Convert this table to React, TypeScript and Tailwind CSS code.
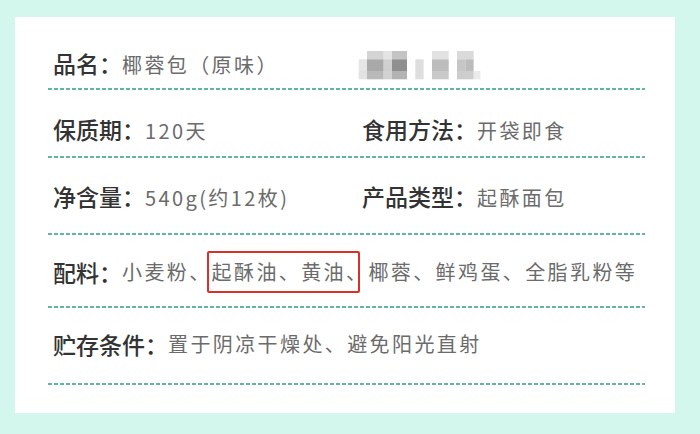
import React from "react";

const cjk = { fontFamily: '"Noto Sans CJK SC", "Noto Sans", sans-serif' };

function Mosaic() {
  const cells: [number, number, number, number, string][] = [
    [10, 0, 16.7, 8.3, "#d4d4d4"],
    [26.7, 0, 8.3, 8.3, "#e4e4e4"],
    [35, 0, 15, 8.3, "#c4c4c4"],
    [75, 0, 16.7, 8.3, "#e2e2e2"],
    [100, 0, 16.7, 8.3, "#dadada"],
    [1.7, 8.3, 8.3, 11.7, "#e6e6e6"],
    [10, 8.3, 16.7, 11.7, "#a9a9a9"],
    [26.7, 8.3, 8.3, 11.7, "#cfcfcf"],
    [35, 8.3, 15, 11.7, "#8f8f8f"],
    [58.3, 8.3, 8.3, 11.7, "#dedede"],
    [75, 8.3, 16.7, 11.7, "#bdbdbd"],
    [100, 8.3, 8.3, 11.7, "#c6c6c6"],
    [108.3, 8.3, 8.3, 11.7, "#bcbcbc"],
    [1.7, 20, 8.3, 8.3, "#e2e2e2"],
    [10, 20, 16.7, 8.3, "#b9b9b9"],
    [26.7, 20, 8.3, 8.3, "#d2d2d2"],
    [35, 20, 15, 8.3, "#b3b3b3"],
    [58.3, 20, 8.3, 8.3, "#dedede"],
    [75, 20, 16.7, 8.3, "#c9c9c9"],
    [100, 20, 16.7, 8.3, "#cdcdcd"],
    [116.7, 20, 6.7, 8.3, "#ebebeb"],
  ];
  return (
    <svg width="125" height="29" viewBox="0 0 125 29" className="block blur-[0.6px]">
      {cells.map(([x, y, w, h, c], i) => (
        <rect key={i} x={x} y={y} width={w} height={h} fill={c} />
      ))}
    </svg>
  );
}

function Dash() {
  return (
    <div className="h-[2px] w-full bg-[repeating-linear-gradient(90deg,#4fae98_0px,#4fae98_4px,transparent_4px,transparent_6px)] opacity-90" />
  );
}

function Label({ children }: { children: React.ReactNode }) {
  return <span className="text-[23px] font-medium text-[#333333]">{children}</span>;
}

function Value({ children }: { children: React.ReactNode }) {
  return <span className="text-[20px] tracking-[2.4px] text-[#6b6b6b]">{children}</span>;
}

export default function App() {
  return (
    <div className="w-[700px] h-[434px] bg-[#d3f7ec] pl-[15px] pr-[25px] pt-[17px] overflow-hidden" style={cjk}>
      <div className="bg-white h-[396px] pl-[33px] pr-[30px] pt-[33px]">
        {/* row 1 */}
        <div className="flex items-center h-[28px] pl-[5px] leading-[28px]">
          <div className="w-[304px] shrink-0 whitespace-nowrap">
            <Label>品名：</Label>
            <Value>椰蓉包（原味）</Value>
          </div>
          <div className="pt-[2px]">
            <Mosaic />
          </div>
        </div>
        <div className="mt-[10px]"><Dash /></div>

        {/* row 2 */}
        <div className="flex items-center h-[28px] pl-[5px] mt-[26px] leading-[28px]">
          <div className="w-[309px] shrink-0 whitespace-nowrap">
            <Label>保质期：</Label>
            <Value>120天</Value>
          </div>
          <div className="whitespace-nowrap">
            <Label>食用方法：</Label>
            <Value>开袋即食</Value>
          </div>
        </div>
        <div className="mt-[12px]"><Dash /></div>

        {/* row 3 */}
        <div className="flex items-center h-[28px] pl-[5px] mt-[25px] leading-[28px]">
          <div className="w-[309px] shrink-0 whitespace-nowrap">
            <Label>净含量：</Label>
            <Value>540g(约12枚)</Value>
          </div>
          <div className="whitespace-nowrap">
            <Label>产品类型：</Label>
            <Value>起酥面包</Value>
          </div>
        </div>
        <div className="mt-[22px]"><Dash /></div>

        {/* row 4 */}
        <div className="flex items-center h-[28px] pl-[5px] mt-[23px] leading-[28px] whitespace-nowrap">
          <Label>配料：</Label>
          <Value>
            小麦粉、
            <span className="relative">
              起酥油、黄油、
              <span className="absolute left-[-5px] right-[8px] top-[-6px] bottom-[-7px] border-2 border-[#d9302c] rounded-[2px]" />
            </span>
            椰蓉、鲜鸡蛋、全脂乳粉等
          </Value>
        </div>
        <div className="mt-[20px]"><Dash /></div>

        {/* row 5 */}
        <div className="flex items-center h-[28px] pl-[5px] mt-[22px] leading-[28px] whitespace-nowrap">
          <Label>贮存条件：</Label>
          <Value>置于阴凉干燥处、避免阳光直射</Value>
        </div>
        <div className="mt-[25px]"><Dash /></div>
      </div>
    </div>
  );
}
